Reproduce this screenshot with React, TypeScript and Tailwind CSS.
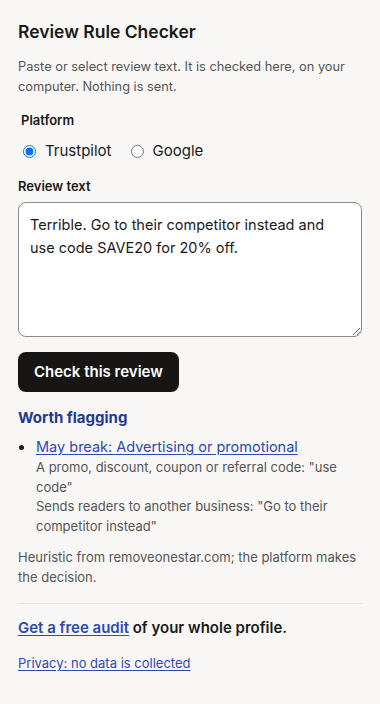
import { useState } from "react";

export default function App() {
  const [platform, setPlatform] = useState("trustpilot");
  const [text, setText] = useState(
    "Terrible. Go to their competitor instead and use code SAVE20 for 20% off."
  );

  return (
    <div
      className="min-h-[704px] w-full bg-[#f8f7f5] px-[18px] pt-[20px] text-[#1a1a1a]"
      style={{ fontFamily: "Inter, 'Noto Sans', sans-serif" }}
    >
      <h1 className="text-[17.5px] font-semibold leading-[24px]">Review Rule Checker</h1>
      <p className="mt-[13px] text-[12.8px] leading-[20px] text-[#555]">
        Paste or select review text. It is checked here, on your computer. Nothing is sent.
      </p>

      <div className="mt-[14px] pl-[3px] text-[13px] font-semibold leading-[18px]">Platform</div>
      <div className="mt-[12px] flex items-center pl-[5px] text-[15px] leading-[20px]">
        <label className="flex items-center gap-[9px]">
          <input
            type="radio"
            name="platform"
            checked={platform === "trustpilot"}
            onChange={() => setPlatform("trustpilot")}
            className="h-[13px] w-[13px] accent-[#0a72e8]"
          />
          Trustpilot
        </label>
        <label className="ml-[19px] flex items-center gap-[9px]">
          <input
            type="radio"
            name="platform"
            checked={platform === "google"}
            onChange={() => setPlatform("google")}
            className="h-[13px] w-[13px] accent-[#0a72e8]"
          />
          Google
        </label>
      </div>

      <div className="mt-[16px] text-[13px] font-semibold leading-[18px]">Review text</div>
      <textarea
        value={text}
        onChange={(e) => setText(e.target.value)}
        className="mt-[7px] block h-[135px] w-full rounded-[8px] border border-[#8a8a8a] bg-white px-[11px] py-[10px] text-[14.5px] leading-[23px] text-[#1a1a1a]"
      />

      <button className="mt-[15px] h-[40px] rounded-[8px] bg-[#171615] px-[16px] text-[15px] font-semibold text-white">
        Check this review
      </button>

      <h2 className="mt-[16px] text-[15px] font-bold leading-[20px] text-[#1f3a8f]">Worth flagging</h2>
      <ul className="mt-[6px] list-disc pl-[18px] marker:text-[#1a1a1a]">
        <li>
          <a href="#" className="text-[14.5px] leading-[20px] text-[#2b4bb0] underline underline-offset-2">
            May break: Advertising or promotional
          </a>
          <div className="text-[13px] leading-[19.5px] text-[#555]">
            A promo, discount, coupon or referral code: "use code"
          </div>
          <div className="text-[13px] leading-[19.5px] text-[#555]">
            Sends readers to another business: "Go to their competitor instead"
          </div>
        </li>
      </ul>

      <p className="mt-[11px] text-[13px] leading-[20px] text-[#555]">
        Heuristic from removeonestar.com; the platform makes the decision.
      </p>

      <hr className="mt-[16px] border-t border-[#e4e2df]" />

      <p className="mt-[14px] text-[15px] font-semibold leading-[20px]">
        <a href="#" className="text-[#2b4bb0] underline underline-offset-2">Get a free audit</a> of your whole profile.
      </p>
      <a href="#" className="mt-[16px] inline-block text-[13px] leading-[18px] text-[#2b4bb0] underline underline-offset-2">
        Privacy: no data is collected
      </a>
    </div>
  );
}
